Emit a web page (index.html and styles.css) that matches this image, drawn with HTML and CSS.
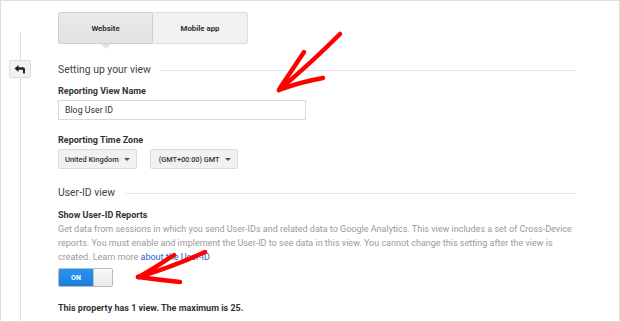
FILE: index.html
```html
<!DOCTYPE html>
<html>
<head>
<meta charset="utf-8">
<link rel="stylesheet" href="styles.css">
</head>
<body>
<div class="frame">
  <div class="rail">
    <div class="rail-gap"></div>
    <div class="rail-line short"></div>
    <div class="back-btn">
      <svg width="12" height="9" viewBox="0 0 12 9"><path d="M0.5 3.5 L4.5 0 L4.5 2.3 L9 2.3 Q11 2.3 11 4.3 L11 8.5 L9 8.5 L9 4.9 Q9 4.7 8.8 4.7 L4.5 4.7 L4.5 7 Z" fill="#222"/></svg>
    </div>
    <div class="rail-line grow"></div>
  </div>
  <div class="main">
    <div class="tabs">
      <div class="tab active">Website</div>
      <div class="tab">Mobile app</div>
    </div>
    <div class="section-head first"><span>Setting up your view</span><i class="rule"></i></div>
    <div class="label l1">Reporting View Name</div>
    <div class="input">Blog User ID</div>
    <div class="label l2">Reporting Time Zone</div>
    <div class="selects">
      <div class="select">United Kingdom <span class="caret"></span></div>
      <div class="select tz">(GMT+00:00) GMT <span class="caret"></span></div>
    </div>
    <div class="section-head second"><span>User-ID view</span><i class="rule"></i></div>
    <div class="label l3">Show User-ID Reports</div>
    <p class="desc">Get data from sessions in which you send User-IDs and related data to Google Analytics. This view includes a set of Cross-Device reports. You must enable and implement the User-ID to see data in this view. You cannot change this setting after the view is created. Learn more <a href="#">about the User-ID</a></p>
    <div class="toggle"><span class="on">ON</span><span class="knob"></span></div>
    <div class="label l4">This property has 1 view. The maximum is 25.</div>
  </div>
  <svg class="arrows" width="620" height="322" viewBox="0 0 620 322">
    <g fill="none" stroke="#ff0000" stroke-width="4.5" stroke-linecap="round" stroke-linejoin="round">
      <path d="M340 34 Q312 62 279 90"/>
      <path d="M304 52 Q292 70 280 88"/>
      <path d="M279 90 Q300 82 323 78"/>
      <path d="M205 252 Q170 268 138 277"/>
      <path d="M174 255 Q158 266 139 277"/>
      <path d="M138 277 Q160 280 180 282"/>
    </g>
  </svg>
</div>
</body>
</html>
```
FILE: styles.css
```css
* { box-sizing: border-box; }
body {
  margin: 0;
  font-family: Roboto, "Liberation Sans", sans-serif;
  background: #fff;
}
.frame {
  position: relative;
  width: 620px;
  height: 322px;
  border: 1px solid #dedede;
  display: flex;
  overflow: hidden;
}
.rail {
  width: 57px;
  display: flex;
  flex-direction: column;
  align-items: flex-start;
}
.rail-gap { height: 31px; }
.rail-line {
  width: 1px;
  background: #dcdcdc;
  margin-left: 19px;
}
.rail-line.short { height: 28px; }
.rail-line.grow { flex: 1; }
.back-btn {
  width: 22px;
  height: 18px;
  margin-left: 8px;
  background: #f1f1f1;
  border: 1px solid #dcdcdc;
  border-radius: 2px;
  display: flex;
  align-items: center;
  justify-content: center;
}
.main {
  flex: 1;
  padding: 11px 44px 0 0;
}
.tabs {
  display: flex;
  height: 32px;
}
.tab {
  width: 95px;
  display: flex;
  align-items: center;
  justify-content: center;
  font-size: 7.8px;
  font-weight: bold;
  color: #333;
  background: #f1f1f1;
  border: 1px solid #dcdcdc;
  border-left: none;
}
.tab:first-child { border-left: 1px solid #dcdcdc; border-radius: 2px 0 0 2px; }
.tab:last-child { border-radius: 0 2px 2px 0; }
.tab.active {
  position: relative;
  background: linear-gradient(#e9e9e9, #e2e2e2);
  border-color: #d0d0d0;
}
.tab.active::after {
  content: "";
  position: absolute;
  left: 50%;
  bottom: -6px;
  margin-left: -5px;
  border-left: 5px solid transparent;
  border-right: 5px solid transparent;
  border-top: 5px solid #e2e2e2;
}
.section-head {
  display: flex;
  align-items: center;
  font-size: 10.4px;
  line-height: 16px;
  color: #444;
}
.section-head .rule {
  flex: 1;
  height: 1px;
  background: #e6e6e6;
  margin-left: 10px;
}
.section-head.first { margin-top: 18px; }
.section-head.second { margin-top: 16px; }
.label {
  font-size: 9px;
  line-height: 14px;
  font-weight: bold;
  color: #333;
}
.l1 { margin-top: 6px; }
.l2 { margin-top: 13px; }
.l3 { margin-top: 7px; }
.l4 { margin-top: 14px; }
.input {
  margin-top: 2px;
  width: 248px;
  height: 20px;
  border: 1px solid #d9d9d9;
  font-size: 8.8px;
  color: #333;
  padding-left: 6px;
  display: flex;
  align-items: center;
}
.selects {
  margin-top: 2px;
  display: flex;
  gap: 13px;
}
.select {
  height: 20px;
  padding: 0 6px 0 6px;
  background: #f1f1f1;
  border: 1px solid #dcdcdc;
  border-radius: 2px;
  font-size: 7.5px;
  font-weight: 500;
  color: #333;
  display: flex;
  align-items: center;
  gap: 5px;
  white-space: nowrap;
}
.select.tz { padding-left: 8px; font-size: 7.3px; }
.caret {
  display: inline-block;
  border-left: 3px solid transparent;
  border-right: 3px solid transparent;
  border-top: 3px solid #555;
}
.desc {
  margin: 0;
  font-size: 9px;
  line-height: 14px;
  color: #9a9a9a;
}
.desc a {
  color: #1a5fd0;
  text-decoration: none;
}
.toggle {
  margin-top: 4px;
  width: 55px;
  height: 19px;
  display: flex;
  border-radius: 2px;
  overflow: hidden;
  border: 1px solid #b9b9b9;
}
.toggle .on {
  width: 34px;
  background: linear-gradient(#2a93f0, #1a7ee0);
  color: #fff;
  font-size: 7px;
  font-weight: bold;
  display: flex;
  align-items: center;
  justify-content: center;
}
.toggle .knob {
  flex: 1;
  background: linear-gradient(#fafafa, #e8e8e8);
  border-left: 1px solid #c5c5c5;
}
.arrows {
  position: absolute;
  left: -1px;
  top: -1px;
  pointer-events: none;
}
```
